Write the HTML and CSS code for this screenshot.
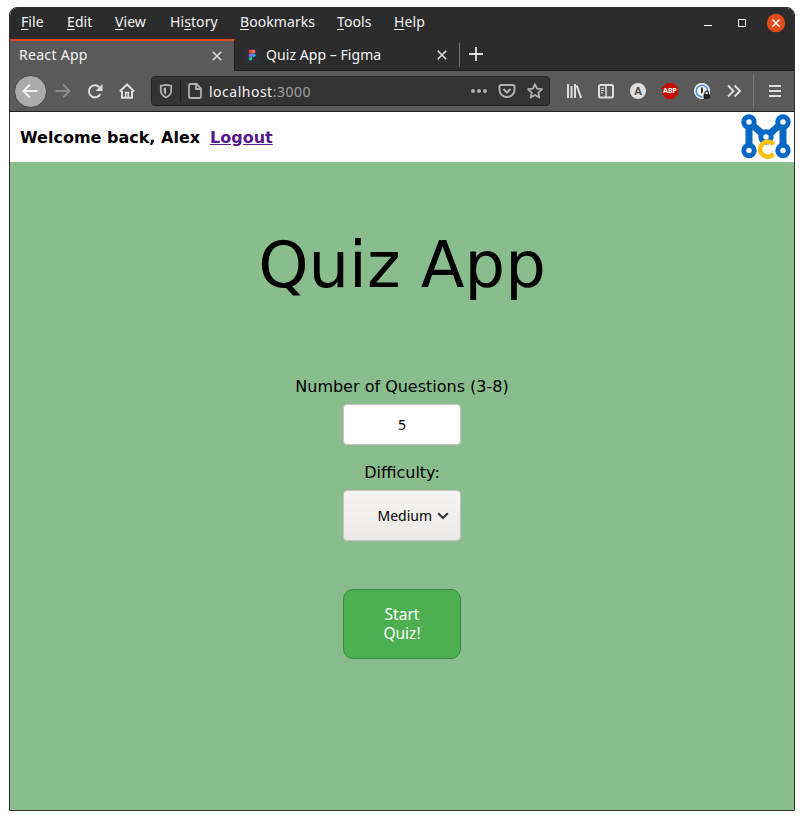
FILE: index.html
```html
<!DOCTYPE html>
<html lang="en">
<head>
<meta charset="utf-8">
<title>React App</title>
<link rel="stylesheet" href="styles.css">
</head>
<body>
<div class="window">
  <div class="menubar">
    <nav class="menus">
      <span><u>F</u>ile</span><span><u>E</u>dit</span><span><u>V</u>iew</span><span>Hi<u>s</u>tory</span><span><u>B</u>ookmarks</span><span><u>T</u>ools</span><span><u>H</u>elp</span>
    </nav>
    <div class="controls">
      <svg width="86" height="28" viewBox="0 0 86 28" fill="none" stroke="#fff">
        <path d="M1 17.500h8M35.500 11.500h7v7h-7z" />
        <circle cx="73" cy="15" r="9.200" fill="#e14c1a" stroke="none"/>
        <path d="M69.500 11.500l7 7m0-7l-7 7" stroke-width="1.500"/>
      </svg>
    </div>
  </div>
  <div class="tabs">
    <div class="tab active"><span class="tab-title react">React App</span>
      <svg class="close" width="10" height="10" viewBox="0 0 10 10"><path d="M.8.8l8.400 8.400m0-8.400L.8 9.200"/></svg></div>
    <div class="tab second">
      <svg class="favicon" width="16" height="16" viewBox="0 0 16 16"><rect width="16" height="16" rx="1" fill="#2b2d38"/><path d="M6.500 2.800H8.200v3.600H6.500a1.800 1.800 0 010-3.600z" fill="#f24e1e"/><path d="M8.200 2.800h1.500a1.800 1.800 0 010 3.600H8.200z" fill="#ff7262"/><path d="M8.200 6.400V10H6.500a1.800 1.800 0 010-3.600z" fill="#a259ff"/><circle cx="9.900" cy="8.200" r="1.700" fill="#1abcfe"/><path d="M8.200 10v1.500A1.750 1.750 0 116.500 10z" fill="#0acf83"/></svg>
      <span class="tab-title figma">Quiz App – Figma</span>
      <svg class="close" width="10" height="10" viewBox="0 0 10 10"><path d="M.8.8l8.400 8.400m0-8.400L.8 9.200"/></svg></div>
    <div class="newtab"><svg width="14" height="14" viewBox="0 0 14 14"><path d="M7 0v14M0 7h14" stroke="#e3e3e3" stroke-width="1.800"/></svg></div>
  </div>
  <div class="toolbar">
    <div class="slot back"><span class="backbtn"><svg width="16" height="16" viewBox="0 0 16 16"><path d="M15.500 8H1.500M8 1.500L1.500 8 8 14.500"/></svg></span></div>
    <div class="slot dim"><svg width="16" height="16" viewBox="0 0 16 16"><path d="M.5 8h14M8 1.500L14.500 8 8 14.500"/></svg></div>
    <div class="slot"><svg width="16" height="16" viewBox="0 0 16 16"><path d="M13.300 11A6 6 0 1112.300 4.200"/><path d="M15.500 1v7H8.500z" fill="#dedede" stroke="none"/></svg></div>
    <div class="slot"><svg width="16" height="16" viewBox="0 0 16 16"><path d="M.8 8.500L8 1.500l7.200 7M3 8v6.800h10V8"/><path d="M6.700 14.500V9.500h2.600v5" stroke-width="1.600"/></svg></div>
    <div class="urlbar">
      <svg class="shield" width="14" height="16" viewBox="0 0 14 16"><path d="M7 1.800l5.200 1v4.700c0 3.500-2.200 5.500-5.200 7-3-1.500-5.200-3.500-5.200-7V2.800z" stroke-width="1.800"/><path d="M7 4.500v7.500C5.200 10.800 4.700 9.300 4.700 7.500V5z" fill="#b8b8b8" stroke="none"/></svg>
      <i class="urlsep"></i>
      <svg class="doc" width="16" height="16" viewBox="0 0 16 16"><path d="M3.500 1h6L14 5.500V13.500Q14 15 12.500 15h-9Q2 15 2 13.500v-11Q2 1 3.500 1zM9 1v5h5" stroke-width="1.800"/></svg>
      <span class="url">localhost<em>:3000</em></span>
      <svg class="actions" width="74" height="16" viewBox="0 0 74 16"><g fill="#b1b1b1" stroke="none"><circle cx="3" cy="8" r="2"/><circle cx="9" cy="8" r="2"/><circle cx="15" cy="8" r="2"/></g><path d="M31 2h12q1.500 0 1.500 1.500V7a7.500 7 0 01-15 0V3.500Q29.500 2 31 2zM33.500 6l3.500 3.500L40.500 6"/><path d="M65 1.200l2 4.500 5 .5-3.700 3.400 1 4.900-4.300-2.500-4.300 2.500 1-4.900L58 6.200l5-.5z" stroke-width="1.800" stroke-linejoin="round"/></svg>
    </div>
    <div class="slot"><svg width="16" height="16" viewBox="0 0 16 16"><path d="M2 1v14M5.500 3v12M9 1v14M10.700 2.500l4.500 12.500"/></svg></div>
    <div class="slot"><svg width="16" height="16" viewBox="0 0 16 16"><rect x="1" y="2" width="14" height="12.500" rx="1.500"/><path d="M8 2v12" stroke-width="1.500"/><path d="M3 5.200h3M3 7.500h3M3 9.800h2" stroke-width="1"/></svg></div>
    <div class="slot"><span class="badge grey">A</span></div>
    <div class="slot"><span class="badge abp">ABP</span></div>
    <div class="slot"><svg width="16" height="16" viewBox="0 0 16 16"><circle cx="8" cy="8" r="8" fill="#f4f4f4" stroke="none"/><circle cx="8" cy="8" r="5.800" stroke="#3d91ec" stroke-width="1.500"/><path d="M8 4.500v6" stroke="#333" stroke-width="2"/><path d="M8.500 9h8v7h-8z" fill="#f4f4f4" stroke="none"/><rect x="9.500" y="11" width="6.500" height="5" rx="1" fill="#222" stroke="none"/><path d="M11 11.500V9.800a1.700 1.700 0 013.400 0v1.700" stroke="#222" stroke-width="1.300"/></svg></div>
    <div class="slot"><svg width="16" height="16" viewBox="0 0 16 16"><path d="M2 2.500L7.500 8 2 13.500M8.500 2.500L14 8l-5.500 5.500"/></svg></div>
    <div class="appmenu"><svg width="14" height="14" viewBox="0 0 14 14"><path d="M1 2h12M1 7h12M1 12h12"/></svg></div>
  </div>
  <header class="header">
    <strong>Welcome back, Alex</strong><a href="#">Logout</a>
    <svg class="logo" width="50" height="46" viewBox="0 0 50 46" fill="none" stroke="#0668c5">
      <path d="M8 8v28M42 8v28M8 8l17 15L42 8" stroke-width="7"/>
      <g stroke-width="5" fill="#fff"><circle cx="8" cy="8" r="5.200"/><circle cx="42" cy="8" r="5.200"/><circle cx="8" cy="36.500" r="5.200"/><circle cx="42" cy="36.500" r="5.200"/><circle cx="25" cy="23" r="5.200"/></g>
      <path d="M32.500 30.500a7.500 7.500 0 100 9.500" stroke="#fdc10d" stroke-width="4.500"/>
    </svg>
  </header>
  <main class="quiz">
    <h1>Quiz App</h1>
    <label for="count">Number of Questions (3-8)</label>
    <input id="count" class="count" value="5">
    <label for="level">Difficulty:</label>
    <button id="level" class="level"><span>Medium</span><svg width="12" height="8" viewBox="0 0 12 8"><path d="M1.200 1.200L6 6l4.800-4.800" fill="none" stroke="#333" stroke-width="2"/></svg></button>
    <button class="start">Start<br>Quiz!</button>
  </main>
</div>
</body>
</html>
```
FILE: styles.css
```css
* { box-sizing: border-box; }
body { margin: 0; background: #fff; font: 16px "DejaVu Sans", sans-serif; color: #000; }
.window { width: 786px; height: 804px; margin: 7px 0 0 9px; border: 1px solid #303030; border-radius: 8px 8px 0 0; overflow: hidden; display: flex; flex-direction: column; }
.menubar, .tabs, .toolbar { font-family: "Noto Sans", sans-serif; font-size: 14px; color: #f2f2f2; flex: none; }
.menubar { height: 31px; background: #2c2c2c; display: flex; justify-content: space-between; }
.menus { display: grid; grid-template-columns: 46px 48px 55px 70px 97px 57px 50px; padding-left: 11px; line-height: 28px; white-space: nowrap; letter-spacing: .08px; }
.menus u { text-underline-offset: 2px; text-decoration-thickness: 1px; }
.controls { padding-right: 5px; }
.controls svg { display: block; }
.tabs { height: 32px; background: #2c2c2c; display: flex; }
.tab { width: 225px; display: flex; align-items: center; justify-content: space-between; padding: 0 12px 0 9px; border-bottom: 1px solid #1d1d1d; }
.tab.second { width: 224px; }
.tab.active { background: #5a5a5a; border-top: 2px solid #e14c1a; border-right: 1px solid #202020; border-bottom: 0; padding-bottom: 1px; }
.tab .favicon { margin-right: 6px; }
.react { letter-spacing: .3px; margin-top: -2px; }
.figma { margin-right: auto; letter-spacing: .06px; }
.close path { fill: none; stroke: #dedede; stroke-width: 1.6; }
.newtab { flex: 1; display: flex; align-items: center; padding-left: 10px; border-bottom: 1px solid #1d1d1d; background: linear-gradient(#777, #777) 0 4px / 1px 24px no-repeat; }
.newtab svg { margin-top: -2px; }
.toolbar { height: 41px; background: #5a5a5a; border-bottom: 1px solid #202020; display: flex; align-items: center; padding-left: 3px; }
.toolbar svg { display: block; fill: none; stroke: #dedede; stroke-width: 2; flex: none; }
.slot { width: 32px; display: flex; justify-content: center; flex: none; }
.back { width: 34px; }
.backbtn { width: 33px; height: 33px; border-radius: 50%; background: #ababab; border: 1px solid #424242; display: grid; place-items: center; }
.toolbar .backbtn svg { stroke: #f0f0f0; }
.toolbar .dim svg { stroke: #8c8c8c; }
.urlbar { width: 399px; height: 30px; margin: 0 8px; background: #333; border: 1px solid #242424; border-radius: 4px; display: flex; align-items: center; padding: 0 5px 0 7px; flex: none; }
.toolbar .urlbar svg { stroke: #b1b1b1; }
.urlsep { width: 1px; height: 22px; background: #202020; margin: 0 6px 0 7px; }
.url { margin-left: 6px; letter-spacing: .5px; }
.url em { font-style: normal; color: #a0a0a0; }
.actions { margin-left: auto; }
.badge { width: 16px; height: 16px; display: grid; place-items: center; font-weight: 700; line-height: 16px; }
.grey { border-radius: 50%; background: #dedede; color: #505050; font-size: 11px; }
.abp { background: #c70d00; color: #fff; font-size: 7px; clip-path: polygon(30% 0, 70% 0, 100% 30%, 100% 70%, 70% 100%, 30% 100%, 0 70%, 0 30%); }
.appmenu { flex: 1; height: 34px; margin-left: 3px; border-left: 1px solid #777; display: flex; align-items: center; padding-left: 14px; }
.header { height: 50px; flex: none; background: #fff; display: flex; align-items: center; padding: 0 3px 0 10px; }
.header a { color: #551a8b; font-weight: 700; margin-left: 10px; }
.logo { margin-left: auto; }
.quiz { flex: 1; background: #8abd8d; display: flex; flex-direction: column; align-items: center; }
h1 { font-size: 64px; font-weight: 400; line-height: 74px; margin: 66px 0 75px; }
label { line-height: 20px; }
.count, .level, .start { width: 118px; font-family: "Noto Sans", sans-serif; margin: 0; }
.count { height: 41px; margin: 7px 0 18px; border: 1px solid #c9c2bc; border-radius: 4px; text-align: center; font-size: 14px; padding: 0; background: #fff; }
.level { height: 51px; margin: 7px 0 48px; border: 1px solid #c9c2bc; border-radius: 4px; background: linear-gradient(#f6f5f3, #eae9e8); color: #000; font-size: 14px; display: flex; align-items: center; justify-content: flex-end; gap: 5px; padding: 0 11px 0 0; }
.start { height: 70px; background: #4caf50; border: 1px solid #38873c; border-radius: 10px; color: #fff; font-size: 15.5px; line-height: 19px; padding: 0; }
```
